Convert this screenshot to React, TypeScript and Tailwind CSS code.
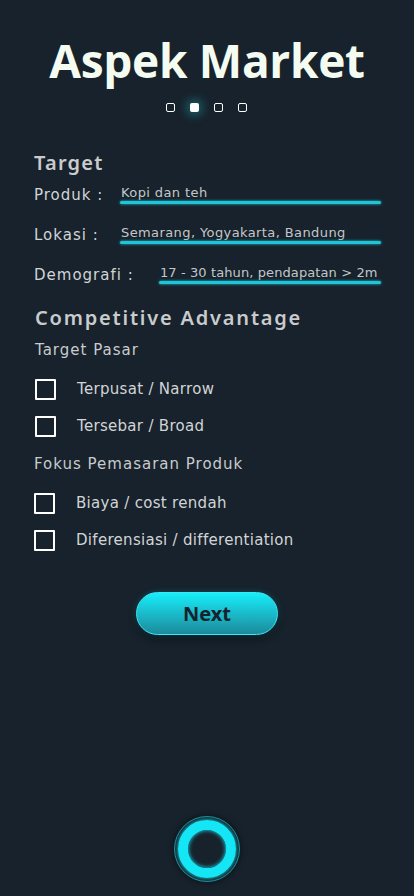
import React from "react";

const body = { fontFamily: '"DejaVu Sans", "Noto Sans", sans-serif' };
const head = { fontFamily: '"Noto Sans", "DejaVu Sans", sans-serif' };

function Field({ label, value, labelW, track }: { label: string; value: string; labelW: string; track: string }) {
  return (
    <div className="flex items-end">
      <div className={`${labelW} shrink-0 text-[15px] tracking-[1px] text-[#d2d4d6] leading-[18px]`}>{label}</div>
      <div className="flex-1 min-w-0 flex flex-col">
        <div className={`pl-[1px] text-[13px] ${track} text-[#c4c7ca] leading-[15px] whitespace-nowrap`}>{value}</div>
        <div className="mt-[1px] h-[3px] rounded-full bg-[#1fc4d6] shadow-[0_0_3px_#1fc4d6]" />
      </div>
    </div>
  );
}

function Check({ label }: { label: string }) {
  return (
    <div className="flex items-center h-[21px]">
      <div className="w-[21px] h-[21px] border-2 border-white rounded-[1px] shrink-0" />
      <div className="ml-[21px] text-[15px] text-[#d2d4d6] tracking-[0.3px]">{label}</div>
    </div>
  );
}

export default function App() {
  return (
    <div className="w-[414px] h-[896px] bg-[#17222c] flex flex-col overflow-hidden" style={body}>
      <h1
        className="text-center text-[46px] font-bold text-[#f4fbf1] leading-none mt-[37px] tracking-[-0.3px]"
        style={{ fontFamily: '"Open Sans", "Noto Sans", sans-serif' }}
      >
        Aspek Market
      </h1>
      <div className="flex justify-center gap-[15px] mt-[20px] pr-[2px]">
        <div className="w-[9px] h-[9px] rounded-[2px] border-[1.5px] border-white" />
        <div className="w-[9px] h-[9px] rounded-[2px] bg-white shadow-[0_0_8px_4px_rgba(30,180,190,0.35)]" />
        <div className="w-[9px] h-[9px] rounded-[2px] border-[1.5px] border-white" />
        <div className="w-[9px] h-[9px] rounded-[2px] border-[1.5px] border-white" />
      </div>

      <div className="pl-[34px] pr-[33px] mt-[41px]">
        <div className="text-[20px] font-semibold text-[#c9cbcd] tracking-[1.2px] leading-none" style={head}>Target</div>
        <div className="mt-[12px] flex flex-col gap-[21px]">
          <Field label="Produk :" value="Kopi dan teh" labelW="w-[86px]" track="tracking-[0.4px]" />
          <Field label="Lokasi  :" value="Semarang, Yogyakarta, Bandung" labelW="w-[86px]" track="tracking-[0.4px]" />
          <Field label="Demografi  :" value="17 - 30 tahun, pendapatan > 2m" labelW="w-[125px]" track="tracking-[0.1px]" />
        </div>

        <div className="mt-[24px] text-[20px] font-semibold text-[#c9cbcd] tracking-[1.8px] leading-none pl-[1px]" style={head}>Competitive Advantage</div>
        <div className="mt-[15px] text-[15px] text-[#c9cbcd] tracking-[1px] leading-none pl-[1px]">Target Pasar</div>
        <div className="mt-[21px] flex flex-col gap-[16px] pl-[1px]">
          <Check label="Terpusat / Narrow" />
          <Check label="Tersebar / Broad" />
        </div>
        <div className="mt-[20px] text-[15px] text-[#c9cbcd] tracking-[1px] leading-none">Fokus Pemasaran Produk</div>
        <div className="mt-[21px] flex flex-col gap-[16px]">
          <Check label="Biaya / cost rendah" />
          <Check label="Diferensiasi / differentiation" />
        </div>
      </div>

      <div className="flex justify-center mt-[41px]">
        <button className="w-[142px] h-[43px] rounded-full bg-gradient-to-b from-[#15eefb] to-[#1a8b9b] border border-[#3ee6f2] shadow-[0_4px_8px_rgba(0,0,0,0.45),0_0_6px_rgba(30,200,220,0.3)] text-[20px] font-bold text-[#16222c]" style={head}>
          Next
        </button>
      </div>

      <div className="flex-1" />
      <div className="flex justify-center mb-[14px]">
        <div className="relative w-[66px] h-[66px] rounded-full border border-[#1fb8c6]/70 flex items-center justify-center shadow-[0_0_6px_rgba(0,0,0,0.6)]">
          <div className="w-[58px] h-[58px] rounded-full border-[10px] border-[#14e6f6] shadow-[0_0_4px_#14e6f6,inset_0_0_4px_#14e6f6] blur-[0.6px]" />
        </div>
      </div>
    </div>
  );
}
